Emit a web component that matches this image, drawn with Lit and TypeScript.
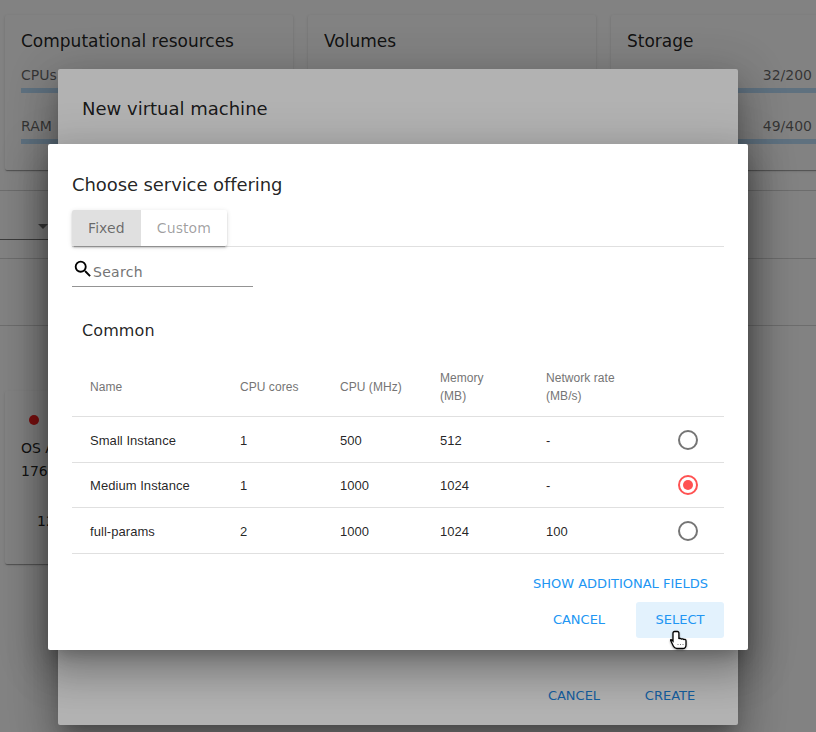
import { LitElement, html, css } from "lit";
import { customElement } from "lit/decorators.js";

const offerings = [
  { name: "Small Instance", cores: "1", mhz: "500", mem: "512", net: "-", on: false },
  { name: "Medium Instance", cores: "1", mhz: "1000", mem: "1024", net: "-", on: true },
  { name: "full-params", cores: "2", mhz: "1000", mem: "1024", net: "100", on: false },
];

@customElement("app-root")
export class AppRoot extends LitElement {
  static styles = css`
    :host {
      display: block;
      position: relative;
      width: 816px;
      height: 732px;
      overflow: hidden;
      background: #fff;
      font-family: "DejaVu Sans", sans-serif;
      color: rgba(0, 0, 0, 0.87);
    }

    /* page behind the dialogs */
    .cards {
      display: grid;
      grid-template-columns: repeat(3, 288px);
      gap: 15px;
      padding: 15px 5px 0;
    }
    .card {
      height: 155px;
      box-sizing: border-box;
      padding: 16px;
      background: #fff;
      border-radius: 2px;
      box-shadow: 0 2px 1px -1px rgba(0, 0, 0, 0.2), 0 1px 1px rgba(0, 0, 0, 0.14), 0 1px 3px rgba(0, 0, 0, 0.12);
    }
    .card h3 {
      margin: 0;
      font-size: 17px;
      font-weight: 400;
      line-height: 20px;
    }
    .meter {
      display: flex;
      justify-content: space-between;
      margin-top: 15px;
      font-size: 14px;
      line-height: 18px;
      color: rgba(0, 0, 0, 0.6);
    }
    .meter + .bar + .meter {
      margin-top: 24px;
    }
    .usage {
      padding-right: 71px;
    }
    .bar {
      height: 5px;
      margin-top: 4px;
      background: #bbdefb;
    }
    .filters {
      margin-top: 20px;
      border-top: 1px solid #d6d6d6;
      height: 67px;
      border-bottom: 1px solid #d6d6d6;
      display: flex;
      align-items: flex-end;
    }
    .select {
      width: 48px;
      height: 48px;
      border-bottom: 1px solid #777;
      margin-bottom: 18px;
      display: flex;
      justify-content: flex-end;
      align-items: flex-end;
      padding-bottom: 10px;
      box-sizing: border-box;
    }
    .select i {
      border: 5px solid transparent;
      border-top-color: #777;
      border-bottom-width: 0;
    }
    .sub {
      height: 66px;
      border-bottom: 1px solid #d6d6d6;
    }
    .vm {
      width: 288px;
      height: 173px;
      box-sizing: border-box;
      margin: 65px 0 0 5px;
      padding: 24px 16px;
      background: #fff;
      border-radius: 2px;
      box-shadow: 0 2px 1px -1px rgba(0, 0, 0, 0.2), 0 1px 1px rgba(0, 0, 0, 0.14), 0 1px 3px rgba(0, 0, 0, 0.12);
      font-size: 14px;
      line-height: 23px;
    }
    .dot {
      width: 10px;
      height: 10px;
      margin: 0 0 12px 8px;
      border-radius: 50%;
      background: #f42020;
    }
    .vm .count {
      margin: 27px 0 0 16px;
    }

    /* overlays */
    .backdrop {
      position: absolute;
      inset: 0;
      background: rgba(0, 0, 0, 0.3);
    }
    .backdrop.first {
      background: rgba(0, 0, 0, 0.27);
    }
    .dialog {
      position: absolute;
      box-sizing: border-box;
      background: #fff;
      border-radius: 2px;
      box-shadow: 0 11px 15px -7px rgba(0, 0, 0, 0.24), 0 24px 38px 3px rgba(0, 0, 0, 0.2), 0 9px 46px 8px rgba(0, 0, 0, 0.16);
    }
    .back {
      left: 58px;
      top: 69px;
      width: 680px;
      height: 656px;
      padding: 28px 24px 12px;
      display: flex;
      flex-direction: column;
      justify-content: space-between;
    }
    .front {
      left: 48px;
      top: 144px;
      width: 700px;
      height: 506px;
      padding: 29px 24px 12px;
      display: flex;
      flex-direction: column;
    }
    h2 {
      margin: 0;
      font-size: 18px;
      font-weight: 400;
      line-height: 24px;
      color: rgba(0, 0, 0, 0.87);
    }
    .front h2 {
      letter-spacing: -0.09px;
    }
    .actions {
      display: flex;
      justify-content: flex-end;
      gap: 8px;
      font-size: 13px;
    }
    .front .actions {
      gap: 13px;
      margin-top: 10px;
    }
    .btn {
      width: 88px;
      height: 36px;
      box-sizing: border-box;
      display: flex;
      align-items: center;
      justify-content: center;
      color: #2196f3;
      border-radius: 3px;
    }
    .front .btn {
      padding-bottom: 1px;
    }
    .back .btn {
      color: #1e88e5;
    }
    .btn.select-btn {
      background: #e3f2fd;
    }
    .tabs-wrap {
      margin-top: 13px;
      border-bottom: 1px solid #e0e0e0;
      height: 36px;
    }
    .tabs {
      display: inline-flex;
      height: 36px;
      border-radius: 2px;
      background: #fff;
      box-shadow: 0 3px 1px -2px rgba(0, 0, 0, 0.2), 0 2px 2px rgba(0, 0, 0, 0.14), 0 1px 5px rgba(0, 0, 0, 0.12);
      font-size: 14px;
      line-height: 36px;
      letter-spacing: 0.1px;
    }
    .tabs span {
      padding: 0 16px;
      color: rgba(0, 0, 0, 0.38);
    }
    .tabs .active {
      background: #e0e0e0;
      color: rgba(0, 0, 0, 0.54);
      border-radius: 2px 0 0 2px;
    }
    .search {
      width: 181px;
      height: 40px;
      box-sizing: border-box;
      border-bottom: 1px solid #949494;
      display: flex;
      align-items: flex-start;
      padding-top: 11px;
      font-size: 14px;
      letter-spacing: 0.3px;
      color: #757575;
    }
    .search svg {
      flex: none;
      margin-right: -1px;
    }
    .search span {
      margin-top: 2px;
      line-height: 24px;
    }
    .group {
      margin: 33px 0 0 10px;
      font-size: 16px;
      line-height: 22px;
      letter-spacing: 0.1px;
    }
    table {
      width: 652px;
      margin-top: 18px;
      border-collapse: collapse;
      table-layout: fixed;
      font-family: "Liberation Sans", sans-serif;
      font-size: 13px;
      letter-spacing: 0.05px;
    }
    th {
      height: 54px;
      padding: 0 0 2px 18px;
      font-size: 12px;
      font-weight: 400;
      line-height: 18px;
      text-align: left;
      color: #757575;
    }
    td {
      height: 45px;
      padding: 0 0 0 18px;
      color: rgba(0, 0, 0, 0.87);
    }
    tbody tr:nth-child(2) td {
      height: 44px;
    }
    tbody tr:nth-child(odd) td:not(:last-child) {
      height: 43px;
      padding-top: 2px;
    }
    tr {
      border-bottom: 1px solid #e0e0e0;
    }
    .radio {
      display: block;
      width: 20px;
      height: 20px;
      box-sizing: border-box;
      margin-left: 24px;
      border: 2px solid #757575;
      border-radius: 50%;
      position: relative;
    }
    .radio.on {
      border-color: #ff5252;
    }
    .radio.on::after {
      content: "";
      position: absolute;
      inset: 3px;
      border-radius: 50%;
      background: #ff5252;
    }
    .more {
      align-self: flex-end;
      margin: 22px 16px 0 0;
      font-size: 13px;
      line-height: 16px;
      color: #2196f3;
    }
    .cursor {
      position: absolute;
      left: 670px;
      top: 630px;
      filter: drop-shadow(0 1px 1px rgba(0, 0, 0, 0.35));
    }
  `;

  private renderCard(title: string, showUsage: boolean) {
    return html`<div class="card">
      <h3>${title}</h3>
      ${showUsage
        ? html`<div class="meter"><span>CPUs</span><span class="usage">32/200</span></div>
            <div class="bar"></div>
            <div class="meter"><span>RAM</span><span class="usage">49/400</span></div>
            <div class="bar"></div>`
        : ""}
    </div>`;
  }

  render() {
    return html`
      <div class="cards">
        ${this.renderCard("Computational resources", true)}
        ${this.renderCard("Volumes", false)}
        ${this.renderCard("Storage", true)}
      </div>
      <div class="filters">
        <div class="select"><i></i></div>
      </div>
      <div class="sub"></div>
      <div class="vm">
        <div class="dot"></div>
        <div>OS A</div>
        <div>176</div>
        <div class="count">12</div>
      </div>

      <div class="backdrop first"></div>
      <div class="dialog back">
        <h2>New virtual machine</h2>
        <div class="actions">
          <div class="btn">CANCEL</div>
          <div class="btn">CREATE</div>
        </div>
      </div>

      <div class="backdrop"></div>
      <div class="dialog front">
        <h2>Choose service offering</h2>
        <div class="tabs-wrap">
          <div class="tabs">
            <span class="active">Fixed</span>
            <span>Custom</span>
          </div>
        </div>
        <div class="search">
          <svg width="22" height="22" viewBox="0 0 24 24" fill="#000">
            <path
              d="M15.5 14h-.79l-.28-.27A6.47 6.47 0 0 0 16 9.5 6.5 6.5 0 1 0 9.5 16c1.61 0 3.09-.59 4.23-1.57l.27.28v.79l5 4.99L20.49 19l-4.99-5zm-6 0C7.01 14 5 11.99 5 9.5S7.01 5 9.5 5 14 7.01 14 9.5 11.99 14 9.5 14z"
            />
          </svg>
          <span>Search</span>
        </div>
        <div class="group">Common</div>
        <table>
          <colgroup>
            <col style="width:150px" />
            <col style="width:100px" />
            <col style="width:100px" />
            <col style="width:106px" />
            <col style="width:108px" />
            <col />
          </colgroup>
          <thead>
            <tr>
              <th>Name</th>
              <th>CPU cores</th>
              <th>CPU (MHz)</th>
              <th>Memory<br />(MB)</th>
              <th>Network rate<br />(MB/s)</th>
              <th></th>
            </tr>
          </thead>
          <tbody>
            ${offerings.map(
              (o) => html`<tr>
                <td>${o.name}</td>
                <td>${o.cores}</td>
                <td>${o.mhz}</td>
                <td>${o.mem}</td>
                <td>${o.net}</td>
                <td><span class="radio ${o.on ? "on" : ""}"></span></td>
              </tr>`
            )}
          </tbody>
        </table>
        <div class="more">SHOW ADDITIONAL FIELDS</div>
        <div class="actions">
          <div class="btn">CANCEL</div>
          <div class="btn select-btn">SELECT</div>
        </div>
      </div>

      <svg class="cursor" width="18" height="20" viewBox="0 0 18 20">
        <path
          d="M4.5 1.5c-.9 0-1.5.6-1.5 1.5v8.2L1.9 10c-.7-.7-1.6-.6-1.2.6l2.6 5.4c.8 1.6 1.6 2.5 3.4 2.5h6c2 0 3.3-1.3 3.3-3.5v-4.3c0-1.4-1.8-1.7-2.3-.7 0-1.3-1.9-1.6-2.4-.6 0-1.2-1.9-1.5-2.4-.5V3c0-.9-.6-1.5-1.4-1.5z"
          fill="#fff"
          stroke="#000"
          stroke-width="1.3"
        />
        <path d="M8 14v2M10.5 14v2M13 14v2" stroke="#777" stroke-width="1" stroke-dasharray="1 1" />
      </svg>
    `;
  }
}

declare global {
  interface HTMLElementTagNameMap {
    "app-root": AppRoot;
  }
}
